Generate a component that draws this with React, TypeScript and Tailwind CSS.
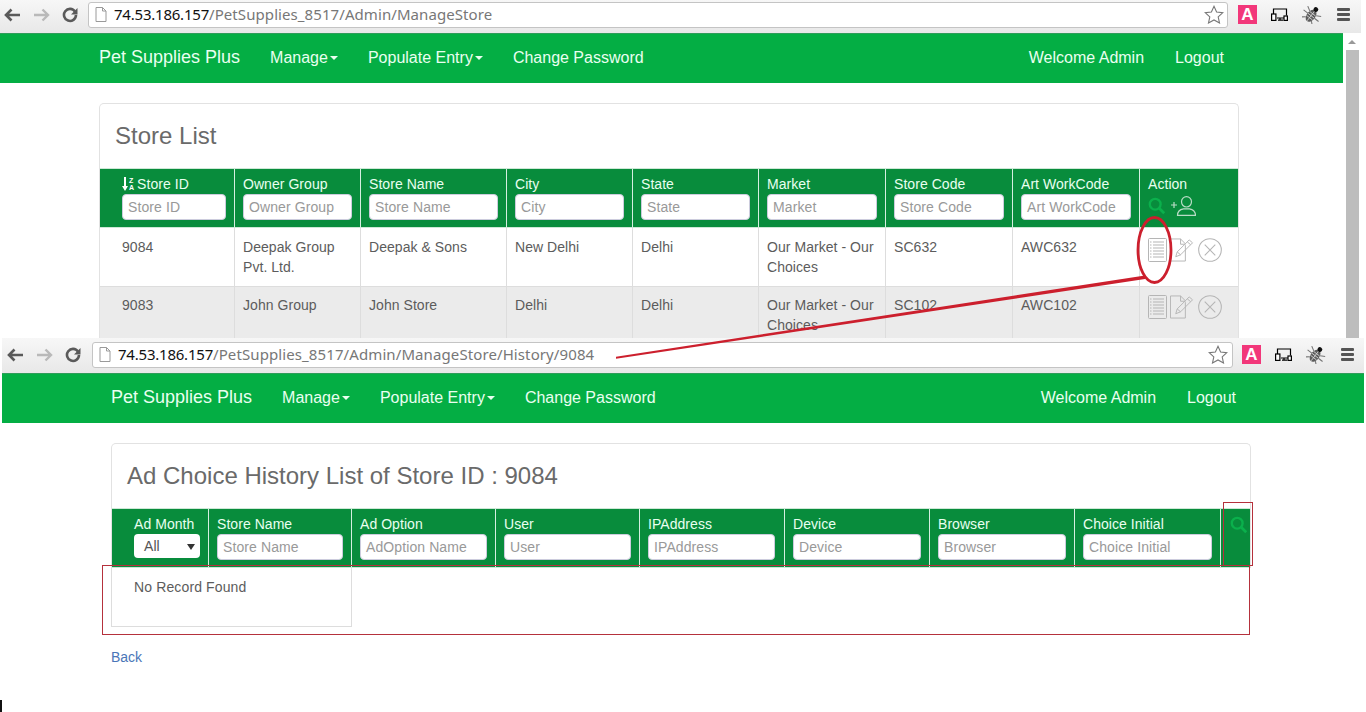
import React from "react";

const F = "font-['Liberation_Sans',Arial,sans-serif]";

function Back() {
  return (
    <svg width="17" height="14" viewBox="0 0 17 14" className="text-[#5a5a5a]">
      <path d="M7.5 1.5 2 7l5.5 5.5M2.5 7H16" fill="none" stroke="currentColor" strokeWidth="2.6" />
    </svg>
  );
}
function Forward() {
  return (
    <svg width="17" height="14" viewBox="0 0 17 14" className="text-[#b9b9b9]">
      <path d="M9.5 1.5 15 7l-5.5 5.5M14.5 7H1" fill="none" stroke="currentColor" strokeWidth="2.4" />
    </svg>
  );
}
function Reload() {
  return (
    <svg width="16" height="16" viewBox="0 0 16 16" className="text-[#5a5a5a]">
      <path d="M13 4.6A6 6 0 1 0 14 8" fill="none" stroke="currentColor" strokeWidth="2.6" />
      <path d="M15.5 1v6.4H9z" fill="currentColor" />
    </svg>
  );
}
function Doc() {
  return (
    <svg width="12" height="15" viewBox="0 0 12 15">
      <path d="M1 .5h6.5L11 4v10.500H1z M7.500 .5V4H11" fill="#fff" stroke="#9a9a9a" />
    </svg>
  );
}
function Star() {
  return (
    <svg width="20" height="19" viewBox="0 0 20 19">
      <path d="M10 1.300l2.600 5.700 6.200.7-4.600 4.200 1.300 6.100L10 15l-5.500 3 1.300-6.100L1.200 7.700l6.200-.7z" fill="#fff" stroke="#777" strokeWidth="1.100" />
    </svg>
  );
}
function Devices() {
  return (
    <svg width="17" height="13" viewBox="0 0 17 13" fill="none" stroke="#000" strokeWidth="1.200">
      <path d="M2.500 6V1h13v6.500M6 10h7M9 10v2.200H7M9 12.200h3" />
      <rect x="0.600" y="6" width="4.300" height="6.400" fill="#fff" />
      <rect x="13" y="8" width="3.400" height="4.400" fill="#fff" />
    </svg>
  );
}
function Bug() {
  return (
    <svg width="20" height="19" viewBox="0 0 20 19">
      <g transform="rotate(38 10 9.500)">
        <ellipse cx="10" cy="11" rx="4.400" ry="6.800" fill="#5c5c5c" />
        <path d="M10 5v12.500M6.200 8.500h7.600M5.800 11h8.400M6.200 13.500h7.600" stroke="#d8d8d8" strokeWidth="0.800" />
        <circle cx="10" cy="3.200" r="2.400" fill="#111" />
        <path d="M6 8 1.500 5.500M5.800 11H.5M6.500 15 2.500 18.500M14 8l4.500-2.500M14.200 11h5.300M13.500 15l4 3.500" stroke="#777" strokeWidth="1.100" fill="none" />
      </g>
    </svg>
  );
}
function Menu() {
  return (
    <div className="flex w-[13px] flex-col gap-[2px]">
      <div className="h-[3px] rounded-[1px] bg-[#555]" />
      <div className="h-[3px] rounded-[1px] bg-[#555]" />
      <div className="h-[3px] rounded-[1px] bg-[#555]" />
    </div>
  );
}

function Chrome({
  path,
  className,
  leftClass,
  boxClass,
  pathClass,
  aClass,
}: {
  path: string;
  className: string;
  leftClass: string;
  boxClass: string;
  pathClass: string;
  aClass: string;
}) {
  return (
    <div className={`flex items-center bg-gradient-to-b from-[#f7f7f7] to-[#e8e8e8] ${className}`}>
      <div className={`flex w-[85px] items-center ${leftClass}`}>
        <Back />
        <Forward />
        <Reload />
      </div>
      <div className={`flex h-[26px] items-center rounded-[3px] border border-[#c4c4c4] bg-white pl-[6px] font-['Noto_Sans',sans-serif] text-[15px] ${boxClass}`}>
        <Doc />
        <span className="ml-[7px] tracking-[-0.22px] text-[#111]">74.53.186.157</span>
        <span className={`text-[#777] ${pathClass}`}>{path}</span>
        <span className="ml-auto flex">
          <Star />
        </span>
      </div>
      <div className={`flex h-[19px] w-[19px] items-center justify-center bg-[#f2377a] font-['Liberation_Sans',sans-serif] text-[17px] font-bold text-white ${aClass}`}>
        A
      </div>
      <div className="ml-[14px]">
        <Devices />
      </div>
      <div className="ml-[14px]">
        <Bug />
      </div>
      <div className="ml-[15px]">
        <Menu />
      </div>
    </div>
  );
}

function Caret() {
  return <span className="ml-[2px] inline-block border-x-[4px] border-t-[4px] border-x-transparent border-t-current align-middle" />;
}

function Nav({ className }: { className: string }) {
  return (
    <div className={`flex h-[50px] items-center border-t border-[#2f9d5a] bg-[#04ae44] pb-[2px] text-[16px] text-[#e9fff0] ${F} ${className}`}>
      <span className="text-[18px]">Pet Supplies Plus</span>
      <span className="ml-[30px]">
        Manage
        <Caret />
      </span>
      <span className="ml-[30px]">
        Populate Entry
        <Caret />
      </span>
      <span className="ml-[30px]">Change Password</span>
      <span className="ml-auto">Welcome Admin</span>
      <span className="ml-[31px]">Logout</span>
    </div>
  );
}

function Field({ text, w }: { text: string; w: string }) {
  return (
    <div className={`mt-[2px] flex h-[26px] items-center rounded-[4px] border border-[#ccd] bg-white pl-[5px] text-[14px] tracking-[0.1px] text-[#999] ${w}`}>
      {text}
    </div>
  );
}

function Search({ size = 20 }: { size?: number }) {
  return (
    <svg width={size} height={size} viewBox="0 0 20 20">
      <circle cx="8" cy="8" r="6" fill="none" stroke="#0bb04c" strokeWidth="2.600" />
      <path d="m12.500 12.500 5.500 5.500" stroke="#0bb04c" strokeWidth="3" />
    </svg>
  );
}

function AddUser() {
  return (
    <svg width="25" height="20" viewBox="0 0 25 20" fill="none" stroke="#b9dcc6" strokeWidth="1.200">
      <path d="M0 9h6M3 6v6" />
      <ellipse cx="15.500" cy="5.800" rx="5" ry="5.200" />
      <path d="M6.500 19.400c0-5 3-6 6-6.500h6c2.500.5 6 1.500 6 6.500z" />
    </svg>
  );
}

function SortIcon() {
  return (
    <span className="mr-[3px] inline-flex h-[14px] items-center align-[-2px]">
      <svg width="6" height="14" viewBox="0 0 6 14">
        <path d="M2 0h2v9h2l-3 5-3-5h2z" fill="#fff" />
      </svg>
      <span className="ml-[1px] flex flex-col text-[7px] font-bold leading-[7px] text-white">
        <span>Z</span>
        <span>A</span>
      </span>
    </span>
  );
}

function ListIcon() {
  return (
    <svg width="19" height="24" viewBox="0 0 19 24" fill="none" stroke="#b5b5b5">
      <rect x="0.500" y="0.500" width="18" height="23" rx="1" />
      <path d="M5 4h11M5 7h11M5 10h11M5 13h11M5 16h11M5 19h11" />
      <path d="M2 4h1.500M2 7h1.500M2 10h1.500M2 13h1.500M2 16h1.500M2 19h1.500" />
    </svg>
  );
}
function EditIcon() {
  return (
    <svg width="24" height="24" viewBox="0 0 25 24" fill="none" stroke="#b5b5b5">
      <path d="M16 7V23.500H.5V.5H11l5 5M11 .5V6h5" />
      <path d="M6 19l1.500-5L20 1.500 23.500 4.500 11 17z M7.500 14l3.500 3M18 3.500l3.500 3" />
    </svg>
  );
}
function CloseIcon() {
  return (
    <svg width="24" height="24" viewBox="0 0 25 25" fill="none" stroke="#b5b5b5" strokeWidth="1.100">
      <circle cx="12.500" cy="12.500" r="11.800" />
      <path d="m7 7 11 11M18 7 7 18" />
    </svg>
  );
}

function Actions({ mt }: { mt: string }) {
  return (
    <div className={`ml-[8px] flex items-start gap-[3px] ${mt}`}>
      <ListIcon />
      <EditIcon />
      <span className="ml-[1px] flex">
        <CloseIcon />
      </span>
    </div>
  );
}

const storeCols = [
  { label: "Store ID", w: "w-[135px]", fw: "w-[104px]", pl: "pl-[22px]" },
  { label: "Owner Group", w: "w-[126px]", fw: "w-[109px]", pl: "pl-[8px]" },
  { label: "Store Name", w: "w-[146px]", fw: "w-[129px]", pl: "pl-[8px]" },
  { label: "City", w: "w-[126px]", fw: "w-[109px]", pl: "pl-[8px]" },
  { label: "State", w: "w-[126px]", fw: "w-[109px]", pl: "pl-[8px]" },
  { label: "Market", w: "w-[127px]", fw: "w-[110px]", pl: "pl-[8px]" },
  { label: "Store Code", w: "w-[127px]", fw: "w-[110px]", pl: "pl-[8px]" },
  { label: "Art WorkCode", w: "w-[127px]", fw: "w-[110px]", pl: "pl-[8px]" },
];

const rows = [
  { bg: "bg-white", pt: "pt-[9px]", mt: "mt-[10px]", cells: ["9084", "Deepak Group Pvt. Ltd.", "Deepak & Sons", "New Delhi", "Delhi", "Our Market - Our Choices", "SC632", "AWC632"] },
  { bg: "bg-[#ebebeb]", pt: "pt-[8px]", mt: "mt-[8px]", cells: ["9083", "John Group", "John Store", "Delhi", "Delhi", "Our Market - Our Choices", "SC102", "AWC102"] },
];

const historyCols = [
  { label: "Store Name", w: "w-[143px]", fw: "w-[126px]" },
  { label: "Ad Option", w: "w-[144px]", fw: "w-[127px]" },
  { label: "User", w: "w-[144px]", fw: "w-[127px]" },
  { label: "IPAddress", w: "w-[145px]", fw: "w-[127px]" },
  { label: "Device", w: "w-[145px]", fw: "w-[128px]" },
  { label: "Browser", w: "w-[145px]", fw: "w-[128px]" },
  { label: "Choice Initial", w: "w-[146px]", fw: "w-[129px]" },
];
const historyHints = ["Store Name", "AdOption Name", "User", "IPAddress", "Device", "Browser", "Choice Initial"];

export default function App() {
  return (
    <div className={`relative h-[712px] w-[1366px] overflow-hidden bg-white ${F}`}>
      {/* first window */}
      <div className="h-[338px] w-[1361px] overflow-hidden">
        <Chrome
          path="/PetSupplies_8517/Admin/ManageStore"
          className="h-[33px] w-[1361px] pb-[4px]"
          leftClass="ml-[3px] pl-[1px] gap-[12px]"
          boxClass="w-[1140px] pr-[3px]"
          pathClass="tracking-[0.08px]"
          aClass="ml-[10px]"
        />
        <div className="flex">
          <div className="w-[1343px]">
            <Nav className="pl-[99px] pr-[119px]" />
            <div className="ml-[99px] mt-[20px] w-[1140px] rounded-t-[5px] border-x border-t border-[#e2e2e2]">
              <div className="flex h-[64px] items-center pl-[15px] text-[24px] text-[#6a6a6a]">Store List</div>
              <div className="flex h-[60px] border-y border-[#cde8d6] bg-[#088c3c] text-[14px] tracking-[0.05px] text-[#e9fff0]">
                {storeCols.map((c, i) => (
                  <div key={c.label} className={`${c.w} ${c.pl} border-r border-[#d5efe0] pt-[7px]`}>
                    <div className="h-[16px] leading-[16px]">
                      {i === 0 && <SortIcon />}
                      {c.label}
                    </div>
                    <Field text={c.label} w={c.fw} />
                  </div>
                ))}
                <div className="flex-1 pl-[8px] pt-[7px]">
                  <div className="h-[16px] leading-[16px]">Action</div>
                  <div className="mt-[4px] flex items-center gap-[5px]">
                    <Search size={18} />
                    <AddUser />
                  </div>
                </div>
              </div>
              {rows.map((r) => (
                <div key={r.cells[0]} className={`flex h-[59px] ${r.bg} border-b border-[#dddddd] text-[14px] leading-[20px] tracking-[0.05px] text-[#5c5c5c]`}>
                  {r.cells.map((t, i) => (
                    <div key={i} className={`${storeCols[i].w} ${storeCols[i].pl} border-r border-[#dddddd] pr-[8px] ${r.pt}`}>
                      {t}
                    </div>
                  ))}
                  <div className="flex-1">
                    <Actions mt={r.mt} />
                  </div>
                </div>
              ))}
            </div>
          </div>
          <div className="flex w-[18px] flex-col items-center">
            <div className="mt-[7px] h-0 w-0 border-x-[4px] border-b-[4px] border-x-transparent border-b-[#999]" />
            <div className="mt-[6px] h-[300px] w-[13px] bg-[#bdbdbd]" />
          </div>
        </div>
      </div>

      {/* second window */}
      <div className="ml-[2px] w-[1362px]">
        <Chrome
          path="/PetSupplies_8517/Admin/ManageStore/History/9084"
          className="h-[35px] w-[1362px] pb-[2px]"
          leftClass="ml-[5px] gap-[12px]"
          boxClass="w-[1141px] pr-[4px]"
          pathClass="tracking-[0.1px]"
          aClass="ml-[9px]"
        />
        <Nav className="pl-[109px] pr-[128px]" />
        <div className="ml-[109px] mt-[20px] w-[1140px] rounded-t-[5px] border-x border-t border-[#e2e2e2]">
          <div className="flex h-[64px] items-center pl-[15px] text-[24px] text-[#6a6a6a]">Ad Choice History List of Store ID : 9084</div>
          <div className="flex h-[60px] border-y border-[#cde8d6] bg-[#088c3c] text-[14px] tracking-[0.05px] text-[#e9fff0]">
            <div className="w-[97px] border-r border-[#d5efe0] pl-[22px] pt-[7px]">
              <div className="h-[16px] leading-[16px]">Ad Month</div>
              <div className="relative mt-[2px] flex h-[24px] w-[66px] items-center rounded-[4px] bg-white pl-[10px] text-[#555]">
                All
                <span className="absolute right-[5px] top-[10px] border-x-[4px] border-t-[6px] border-x-transparent border-t-[#333]" />
              </div>
            </div>
            {historyCols.map((c, i) => (
              <div key={c.label} className={`${c.w} border-r border-[#d5efe0] pl-[8px] pt-[7px]`}>
                <div className="h-[16px] leading-[16px]">{c.label}</div>
                <Field text={historyHints[i]} w={c.fw} />
              </div>
            ))}
            <div className="flex-1 pl-[9px] pt-[7px]">
              <Search size={18} />
            </div>
          </div>
        </div>
        <div className="ml-[109px] flex h-[59px] w-[241px] border border-t-0 border-[#dddddd] pl-[22px] pt-[9px] text-[14px] leading-[20px] tracking-[0.13px] text-[#5c5c5c]">
          No Record Found
        </div>
        <div className="ml-[109px] mt-[20px] text-[14px] leading-[20px] text-[#4a76b8]">Back</div>
      </div>

      {/* annotations */}
      <svg width="1366" height="712" viewBox="0 0 1366 712" className="pointer-events-none absolute left-0 top-0">
        <ellipse cx="1154.500" cy="250" rx="16.500" ry="32.500" fill="none" stroke="#cc1f2d" strokeWidth="2.800" />
        <polygon points="616,356.800 1145,275.500 1145,279 616,358.800" fill="#cc1f2d" />
        <path d="M1 700v12" stroke="#111" strokeWidth="2" />
      </svg>
      <div className="absolute left-[102px] top-[565px] h-[70px] w-[1148px] border border-[#b5313c]" />
      <div className="absolute left-[1223px] top-[502px] h-[64px] w-[30px] border border-[#b5313c]" />
    </div>
  );
}
